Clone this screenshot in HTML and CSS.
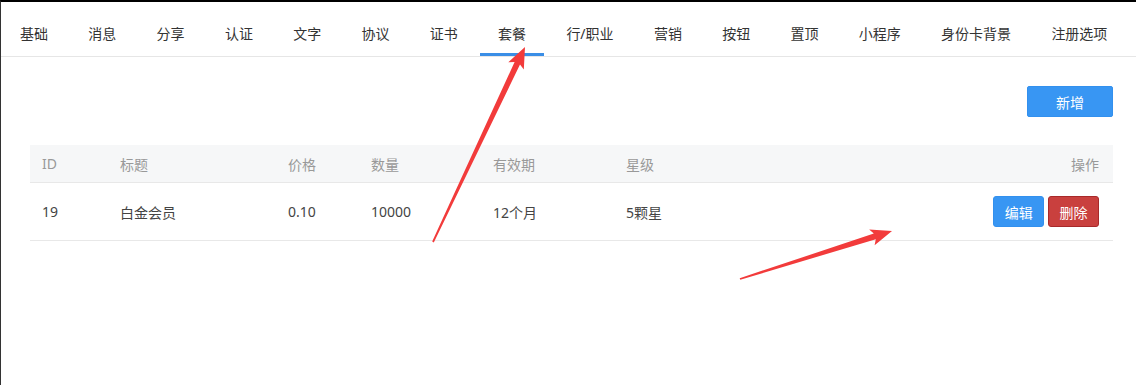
FILE: index.html
```html
<!DOCTYPE html>
<html lang="zh-CN">
<head>
    <meta charset="UTF-8">
    <meta name="viewport" content="width=device-width, initial-scale=1.0">
    <title>套餐</title>
    <link rel="stylesheet" href="styles.css">
</head>
<body>
    <ul class="tabs">
        <li>基础</li>
        <li>消息</li>
        <li>分享</li>
        <li>认证</li>
        <li>文字</li>
        <li>协议</li>
        <li>证书</li>
        <li class="active">套餐</li>
        <li>行/职业</li>
        <li>营销</li>
        <li>按钮</li>
        <li>置顶</li>
        <li>小程序</li>
        <li>身份卡背景</li>
        <li>注册选项</li>
    </ul>

    <div class="content">
        <div class="toolbar">
            <button class="btn btn-blue btn-add">新增</button>
        </div>

        <table class="list">
            <colgroup>
                <col class="col-id">
                <col class="col-title">
                <col class="col-price">
                <col class="col-count">
                <col class="col-period">
                <col class="col-star">
                <col>
            </colgroup>
            <thead>
                <tr>
                    <th>ID</th>
                    <th>标题</th>
                    <th>价格</th>
                    <th>数量</th>
                    <th>有效期</th>
                    <th>星级</th>
                    <th class="ops">操作</th>
                </tr>
            </thead>
            <tbody>
                <tr>
                    <td>19</td>
                    <td>白金会员</td>
                    <td>0.10</td>
                    <td>10000</td>
                    <td>12个月</td>
                    <td>5颗星</td>
                    <td class="ops">
                        <button class="btn btn-blue btn-sm">编辑</button>
                        <button class="btn btn-red btn-sm">删除</button>
                    </td>
                </tr>
            </tbody>
        </table>
    </div>

    <!-- annotation arrows -->
    <svg class="marks" width="1136" height="385" viewBox="0 0 1136 385">
        <polygon points="432.2,241.6 514.6,62.0 508.3,62.2 525,47 523.8,69.6 520.0,64.6 433.8,242.4" />
        <polygon points="739.7,278.2 873.8,233.6 869.2,229.4 892,231 874.6,245.2 875.8,239.2 740.3,279.8" />
    </svg>
</body>
</html>
```

FILE: styles.css
```css
body {
    margin: 0;
    height: 383px;
    border-top: 2px solid #000;
    border-left: 1px solid #333;
    background: #fff;
    font-family: "Noto Sans", "Noto Sans CJK SC", sans-serif;
    font-size: 14px;
    color: #333;
    position: relative;
    overflow: hidden;
}

.tabs {
    display: flex;
    gap: 4.3px;
    margin: 0;
    padding: 0 0 0 1px;
    list-style: none;
    border-bottom: 1px solid #e6e6e6;
}

.tabs li {
    padding: 10px 18px 0;
    line-height: 44px;
    white-space: nowrap;
    cursor: pointer;
}

.tabs li.active {
    box-shadow: inset 0 -3px 0 #3a8ee6;
}

.content {
    padding: 29px 23px 0 29px;
}

.toolbar {
    display: flex;
    justify-content: flex-end;
    margin-bottom: 28px;
}

.btn {
    height: 31px;
    border: 1px solid transparent;
    border-radius: 2px;
    font-family: inherit;
    font-size: 14px;
    color: #fff;
    cursor: pointer;
}

.btn-add {
    width: 86px;
}

.btn-sm {
    width: 51px;
    padding: 0;
    border-radius: 3px;
}

.btn-blue {
    background: #3896f3;
    border-color: #3290ee;
}

.btn-red {
    background: #c9403e;
    border-color: #a8292a;
}

.list {
    width: 100%;
    border-collapse: collapse;
    table-layout: fixed;
}

.col-id { width: 78px; }
.col-title { width: 168px; }
.col-price { width: 83px; }
.col-count { width: 122px; }
.col-period { width: 133px; }
.col-star { width: 200px; }

.list th {
    height: 37px;
    padding: 0 12px;
    background: #f6f7f8;
    border-bottom: 1px solid #e8e8e8;
    font-weight: normal;
    color: #999;
    text-align: left;
}

.list td {
    height: 57px;
    padding: 0 12px;
    border-bottom: 1px solid #e8e8e8;
    color: #444;
}

.list .ops {
    text-align: right;
    padding-right: 14px;
    white-space: nowrap;
}

.marks {
    position: absolute;
    top: -2px;
    left: -1px;
    pointer-events: none;
}

.marks polygon {
    fill: #f23b3b;
}
```
